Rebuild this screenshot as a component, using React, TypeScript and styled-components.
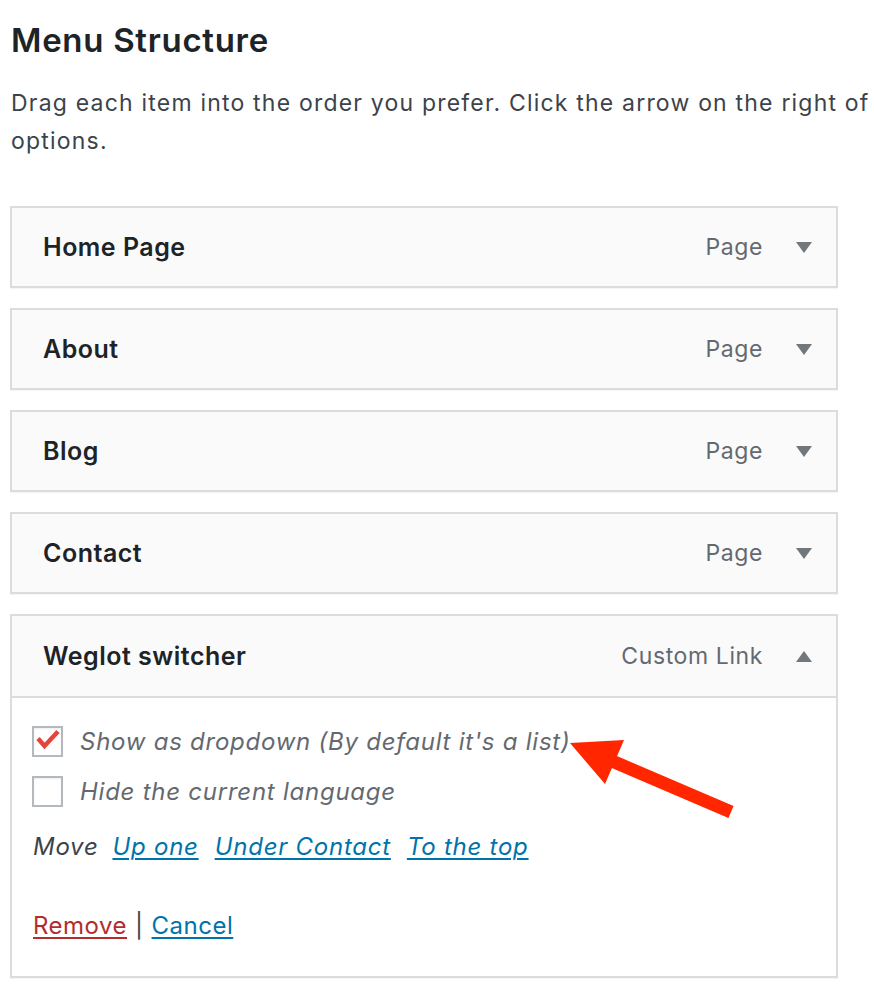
import React from "react";
import styled, { createGlobalStyle } from "styled-components";

const Global = createGlobalStyle`
  html, body { margin: 0; padding: 0; background: #ffffff; overflow: hidden; }
  body { font-family: Inter, "Noto Sans", "Liberation Sans", sans-serif; color: #1d2327; }
`;

const Page = styled.div`
  position: relative;
  width: 874px;
  height: 1006px;
  padding: 0 0 0 10px;
  box-sizing: border-box;
  overflow: hidden;
`;

const Heading = styled.h2`
  margin: 0;
  padding-top: 20px;
  font-size: 33px;
  line-height: 40px;
  font-weight: 600;
  color: #1d2327;
  letter-spacing: 0.7px;
  padding-left: 1px;
`;

const Description = styled.p`
  margin: 24px 0 0 0;
  padding-left: 1px;
  font-size: 23px;
  line-height: 38px;
  font-weight: 400;
  color: #3c434a;
  letter-spacing: 1.2px;
  white-space: nowrap;
`;

const List = styled.div`
  margin-top: 46px;
  display: flex;
  flex-direction: column;
  gap: 20px;
  width: 828px;
`;

const Item = styled.div`
  border: 2px solid #dcdcde;
  box-shadow: 0 1px 1px rgba(0, 0, 0, 0.04);
  background: #fafafa;
`;

const ItemHeader = styled.div<{ $open?: boolean }>`
  display: flex;
  align-items: center;
  height: ${(p) => (p.$open ? "82px" : "78px")};
  box-sizing: border-box;
  padding: 0 24px 0 31px;
  border-bottom: ${(p) => (p.$open ? "2px solid #dcdcde" : "none")};
`;

const Title = styled.span`
  flex: 1;
  font-size: 25px;
  font-weight: 600;
  color: #1d2327;
  letter-spacing: 0.5px;
`;

const TypeLabel = styled.span`
  font-size: 23px;
  color: #646970;
  letter-spacing: 0.6px;
  margin-right: 33px;
`;

const Toggle = styled.svg`
  width: 16px;
  height: 11px;
  display: block;
`;

const Body = styled.div`
  background: #ffffff;
  padding: 28px 20px 34px 20px;
`;

const CheckRow = styled.label`
  display: flex;
  align-items: center;
  gap: 17px;
  height: 31px;
  margin-bottom: 19px;
`;

const Box = styled.span`
  width: 31px;
  height: 31px;
  box-sizing: border-box;
  border: 2px solid #b4b9be;
  background: #fff;
  display: flex;
  align-items: center;
  justify-content: center;
  box-shadow: inset 0 1px 2px rgba(0, 0, 0, 0.07);
`;

const Check = styled.svg`
  width: 27px;
  height: 27px;
  display: block;
`;

const LabelText = styled.span`
  font-size: 24px;
  font-style: italic;
  letter-spacing: 0.75px;
  color: #646970;
`;

const MoveRow = styled.div`
  display: flex;
  align-items: center;
  gap: 16px;
  margin-top: 24px;
  padding-left: 1px;
  font-size: 24px;
  font-style: italic;
  letter-spacing: 0.75px;
  color: #3c434a;
  line-height: 32px;
`;

const MoveLabel = styled.span`
  margin-right: -2px;
`;

const Link = styled.a<{ $danger?: boolean }>`
  color: ${(p) => (p.$danger ? "#b32d2e" : "#0073aa")};
  text-decoration: underline;
  text-underline-offset: 3px;
  text-decoration-thickness: 2px;
  cursor: pointer;
`;

const Actions = styled.div`
  margin-top: 47px;
  padding-left: 1px;
  font-size: 24px;
  letter-spacing: 0.5px;
  line-height: 32px;
  color: #3c434a;
  display: flex;
  align-items: center;
  gap: 8px;
`;

const Annotation = styled.svg`
  position: absolute;
  left: 560px;
  top: 729px;
  width: 180px;
  height: 95px;
  overflow: visible;
`;

const Caret = ({ up }: { up?: boolean }) => (
  <Toggle viewBox="0 0 16 11">
    {up ? (
      <polygon points="8,0 16,11 0,11" fill="#72777c" />
    ) : (
      <polygon points="0,0 16,0 8,11" fill="#72777c" />
    )}
  </Toggle>
);

const closedItems = ["Home Page", "About", "Blog", "Contact"];

export default function App() {
  return (
    <>
      <Global />
      <Page>
        <Heading>Menu Structure</Heading>
        <Description>
          Drag each item into the order you prefer. Click the arrow on the right of
          <br />
          options.
        </Description>
        <List>
          {closedItems.map((t) => (
            <Item key={t}>
              <ItemHeader>
                <Title>{t}</Title>
                <TypeLabel>Page</TypeLabel>
                <Caret />
              </ItemHeader>
            </Item>
          ))}
          <Item>
            <ItemHeader $open>
              <Title>Weglot switcher</Title>
              <TypeLabel>Custom Link</TypeLabel>
              <Caret up />
            </ItemHeader>
            <Body>
              <CheckRow>
                <Box>
                  <Check viewBox="0 0 27 27">
                    <path
                      d="M4 10.5 L10.5 18 L24 3.5"
                      fill="none"
                      stroke="#e2453c"
                      strokeWidth="4.5"
                      strokeLinejoin="miter"
                    />
                  </Check>
                </Box>
                <LabelText>Show as dropdown (By default it's a list)</LabelText>
              </CheckRow>
              <CheckRow>
                <Box />
                <LabelText>Hide the current language</LabelText>
              </CheckRow>
              <MoveRow>
                <MoveLabel>Move</MoveLabel>
                <Link>Up one</Link>
                <Link>Under Contact</Link>
                <Link>To the top</Link>
              </MoveRow>
              <Actions>
                <Link $danger>Remove</Link>
                <span>|</span>
                <Link>Cancel</Link>
              </Actions>
            </Body>
          </Item>
        </List>
        <Annotation viewBox="0 0 180 95">
          <line x1="52" y1="32" x2="171" y2="83" stroke="#ff2600" strokeWidth="13" />
          <polygon points="10,14 64,11 45,55" fill="#ff2600" />
        </Annotation>
      </Page>
    </>
  );
}
